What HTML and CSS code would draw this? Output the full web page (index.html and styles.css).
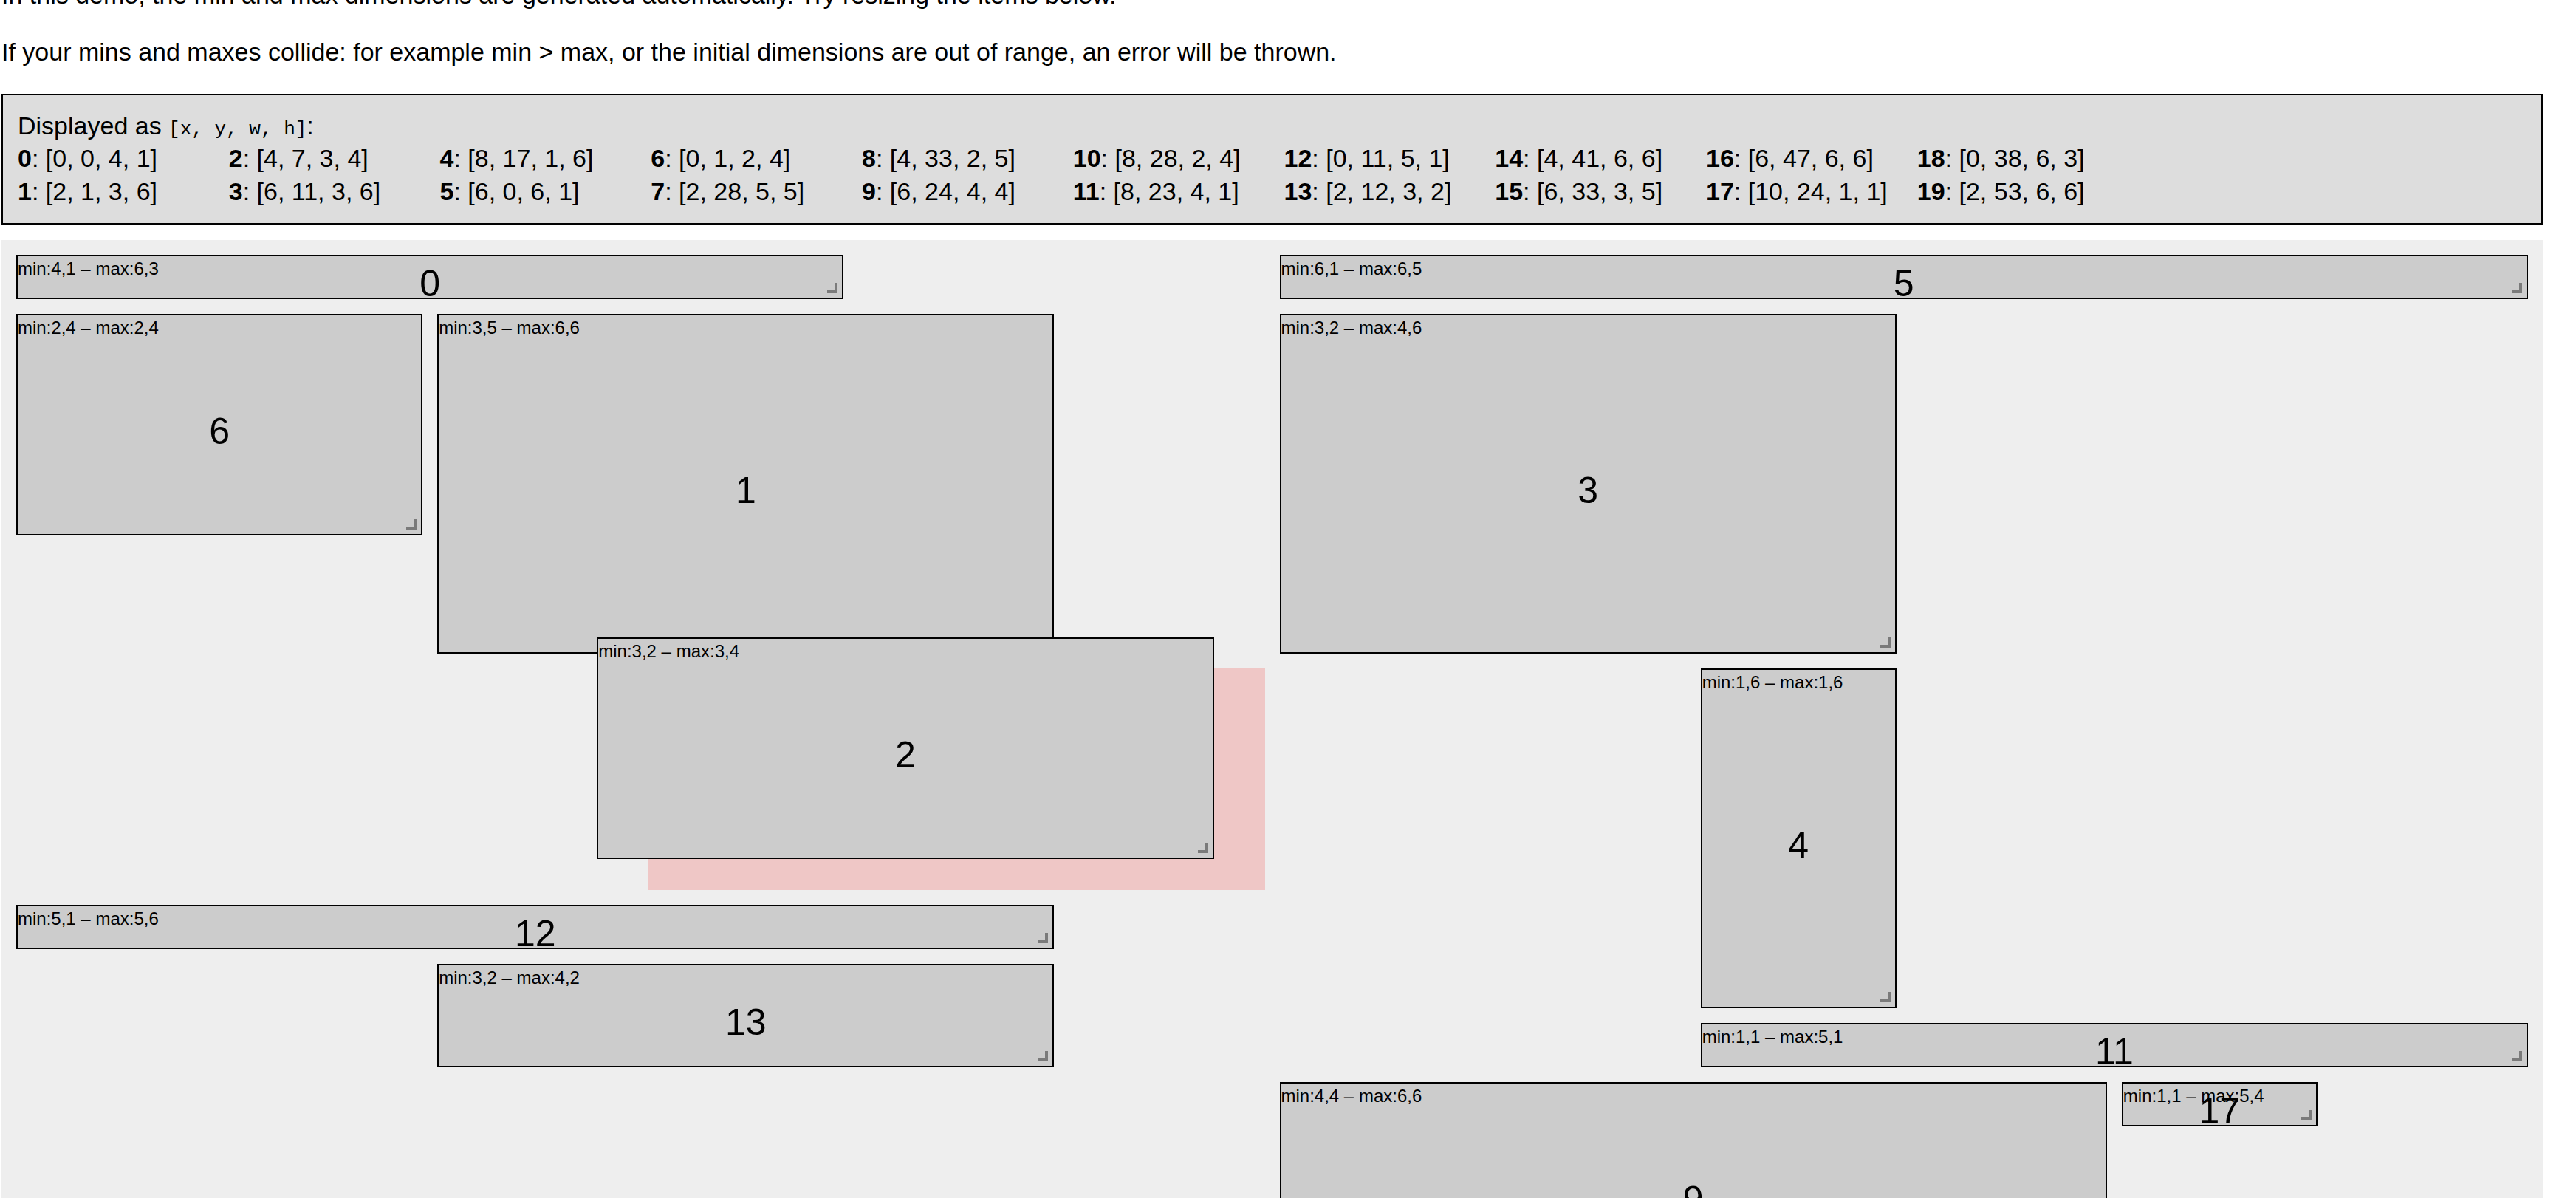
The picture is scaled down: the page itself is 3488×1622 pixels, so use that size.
FILE: index.html
```html
<!DOCTYPE html>
<html>
<head>
    <title>Minimum and Maximum Width/Height</title>
    <link rel="stylesheet" href="styles.css">
</head>
<body>
<div class="page">

<p class="intro">In this demo, the min and max dimensions are generated automatically. Try resizing the items below.</p>
<p>If your mins and maxes collide: for example min &gt; max, or the initial dimensions are out of range, an error will be thrown.</p>

<div class="layout-json">
    <div class="json-title">Displayed as <code>[x, y, w, h]</code>:</div>
    <div class="columns">
        <div class="layout-item"><b>0</b>: [0, 0, 4, 1]</div>
        <div class="layout-item"><b>1</b>: [2, 1, 3, 6]</div>
        <div class="layout-item"><b>2</b>: [4, 7, 3, 4]</div>
        <div class="layout-item"><b>3</b>: [6, 11, 3, 6]</div>
        <div class="layout-item"><b>4</b>: [8, 17, 1, 6]</div>
        <div class="layout-item"><b>5</b>: [6, 0, 6, 1]</div>
        <div class="layout-item"><b>6</b>: [0, 1, 2, 4]</div>
        <div class="layout-item"><b>7</b>: [2, 28, 5, 5]</div>
        <div class="layout-item"><b>8</b>: [4, 33, 2, 5]</div>
        <div class="layout-item"><b>9</b>: [6, 24, 4, 4]</div>
        <div class="layout-item"><b>10</b>: [8, 28, 2, 4]</div>
        <div class="layout-item"><b>11</b>: [8, 23, 4, 1]</div>
        <div class="layout-item"><b>12</b>: [0, 11, 5, 1]</div>
        <div class="layout-item"><b>13</b>: [2, 12, 3, 2]</div>
        <div class="layout-item"><b>14</b>: [4, 41, 6, 6]</div>
        <div class="layout-item"><b>15</b>: [6, 33, 3, 5]</div>
        <div class="layout-item"><b>16</b>: [6, 47, 6, 6]</div>
        <div class="layout-item"><b>17</b>: [10, 24, 1, 1]</div>
        <div class="layout-item"><b>18</b>: [0, 38, 6, 3]</div>
        <div class="layout-item"><b>19</b>: [2, 53, 6, 6]</div>
    </div>
</div>

<div class="grid-layout">
    <div class="grid-item" style="grid-area: 1 / 1 / span 1 / span 4">
        <span class="min-max">min:4,1 – max:6,3</span>
        <span class="text">0</span>
        <span class="resize-handle"></span>
    </div>
    <div class="grid-item" style="grid-area: 1 / 7 / span 1 / span 6">
        <span class="min-max">min:6,1 – max:6,5</span>
        <span class="text">5</span>
        <span class="resize-handle"></span>
    </div>
    <div class="grid-item" style="grid-area: 2 / 1 / span 4 / span 2">
        <span class="min-max">min:2,4 – max:2,4</span>
        <span class="text">6</span>
        <span class="resize-handle"></span>
    </div>
    <div class="grid-item" style="grid-area: 2 / 3 / span 6 / span 3">
        <span class="min-max">min:3,5 – max:6,6</span>
        <span class="text">1</span>
        <span class="resize-handle"></span>
    </div>
    <div class="grid-item" style="grid-area: 2 / 7 / span 6 / span 3">
        <span class="min-max">min:3,2 – max:4,6</span>
        <span class="text">3</span>
        <span class="resize-handle"></span>
    </div>
    <div class="grid-item" style="grid-area: 8 / 9 / span 6 / span 1">
        <span class="min-max">min:1,6 – max:1,6</span>
        <span class="text">4</span>
        <span class="resize-handle"></span>
    </div>
    <div class="grid-item" style="grid-area: 12 / 1 / span 1 / span 5">
        <span class="min-max">min:5,1 – max:5,6</span>
        <span class="text">12</span>
        <span class="resize-handle"></span>
    </div>
    <div class="grid-item" style="grid-area: 13 / 3 / span 2 / span 3">
        <span class="min-max">min:3,2 – max:4,2</span>
        <span class="text">13</span>
        <span class="resize-handle"></span>
    </div>
    <div class="grid-item" style="grid-area: 14 / 9 / span 1 / span 4">
        <span class="min-max">min:1,1 – max:5,1</span>
        <span class="text">11</span>
        <span class="resize-handle"></span>
    </div>
    <div class="grid-item" style="grid-area: 15 / 7 / span 4 / span 4">
        <span class="min-max">min:4,4 – max:6,6</span>
        <span class="text">9</span>
        <span class="resize-handle"></span>
    </div>
    <div class="grid-item" style="grid-area: 15 / 11 / span 1 / span 1">
        <span class="min-max">min:1,1 – max:5,4</span>
        <span class="text">17</span>
        <span class="resize-handle"></span>
    </div>

    <!-- item 2 is being dragged: placeholder shows where it will drop -->
    <div class="grid-placeholder" style="grid-area: 8 / 4 / span 4 / span 3"></div>
    <div class="grid-item dragging" style="grid-area: 8 / 4 / span 4 / span 3">
        <span class="min-max">min:3,2 – max:3,4</span>
        <span class="text">2</span>
        <span class="resize-handle"></span>
    </div>
</div>

</div>
</body>
</html>
```

FILE: styles.css
```css
body { margin: 0; font-family: "Liberation Sans", Arial, sans-serif; font-size: 34px; line-height: 45px; color: #000; background: #fff; }
.page { width: 3441px; margin-left: 2px; }
p { margin: 32px 0; }
.intro { margin-top: -29px; }

.layout-json { background: #ddd; border: 2px solid #000; margin-top: 34px; padding: 20px; }
.json-title { height: 43px; line-height: 43px; }
.layout-json code { font-family: "Liberation Mono", monospace; font-size: 26px; line-height: 1; }
.columns { display: grid; grid-template-rows: repeat(2, 45px); grid-auto-flow: column; grid-auto-columns: 253.75px; column-gap: 32px; }
.layout-item { white-space: nowrap; }

.grid-layout { display: grid; grid-template-columns: repeat(12, minmax(0, 1fr)); grid-auto-rows: 60px; gap: 20px; padding: 20px; margin-top: 21px; background: #eee; }
.grid-item { position: relative; box-sizing: border-box; min-width: 0; background: #ccc; border: 2px solid #000; }
.grid-item .min-max { display: block; font-size: 24px; line-height: 34px; white-space: nowrap; }
.grid-item .text { position: absolute; top: 0; bottom: 0; left: 0; right: 0; margin: auto; height: 48px; font-size: 50px; line-height: 67px; text-align: center; }
.resize-handle { position: absolute; right: 0; bottom: 0; width: 40px; height: 40px; }
.resize-handle::after { content: ""; position: absolute; right: 6px; bottom: 6px; width: 10px; height: 10px; border-right: 4px solid rgba(0, 0, 0, 0.4); border-bottom: 4px solid rgba(0, 0, 0, 0.4); }

.grid-placeholder { background: #efc7c6; z-index: 2; }
.dragging { z-index: 3; transform: translate(-69px, -42px); }
```
